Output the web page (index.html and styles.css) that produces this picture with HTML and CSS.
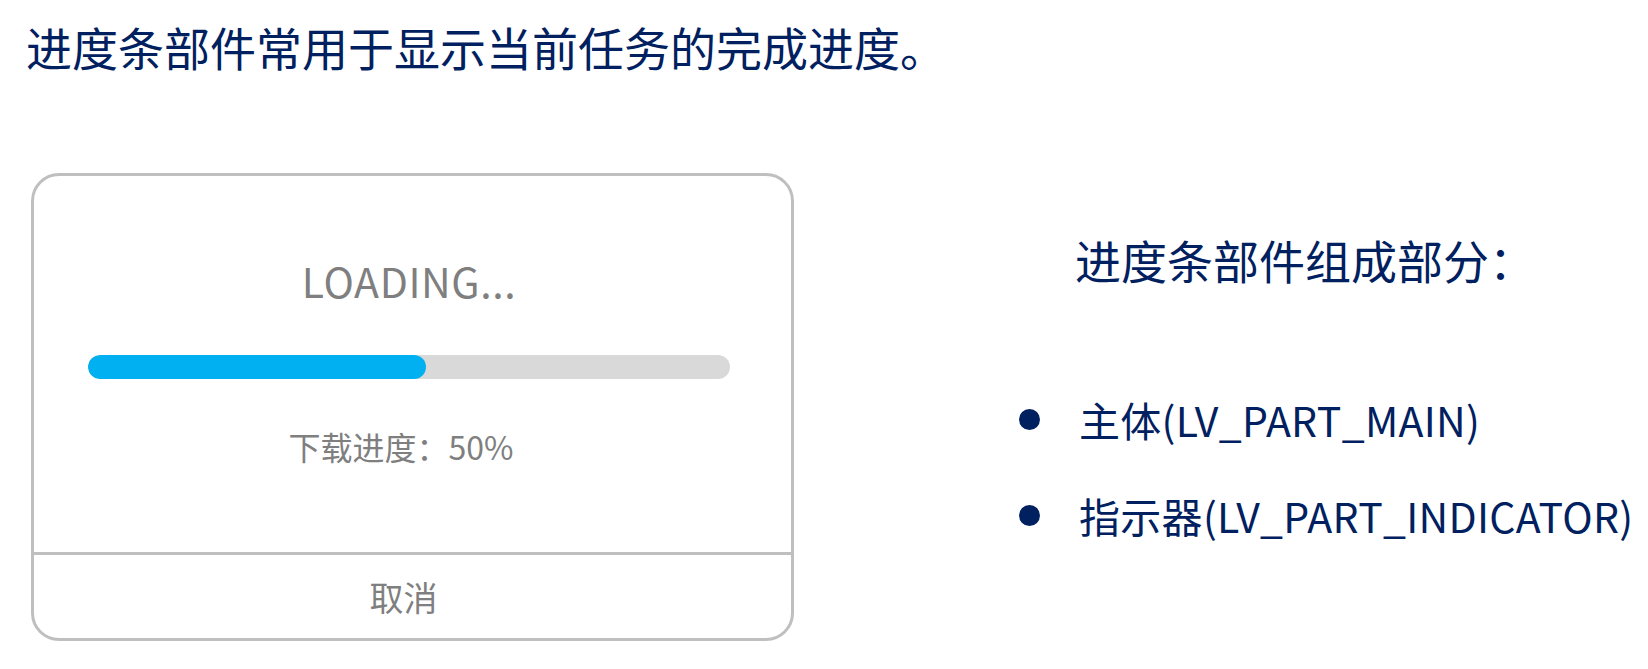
FILE: index.html
```html
<!DOCTYPE html>
<html lang="zh-CN">
<head>
<meta charset="utf-8">
<title>进度条部件</title>
<link rel="stylesheet" href="styles.css">
</head>
<body>
<div class="page">
  <h1 class="title">进度条部件常用于显示当前任务的完成进度。</h1>
  <div class="main">
    <div class="card">
      <div class="card-body">
        <div class="loading">LOADING...</div>
        <div class="bar"><div class="bar-fill" style="width: 52.6%"></div></div>
        <div class="progress-text">下载进度：50%</div>
      </div>
      <div class="card-footer">取消</div>
    </div>
    <div class="info">
      <h2 class="info-title">进度条部件组成部分：</h2>
      <ul class="parts">
        <li class="part"><span class="dot"></span><span class="part-text">主体(LV_PART_MAIN)</span></li>
        <li class="part"><span class="dot"></span><span class="part-text">指示器(LV_PART_INDICATOR)</span></li>
      </ul>
    </div>
  </div>
</div>
</body>
</html>
```

FILE: styles.css
```css
html, body {
  margin: 0;
  padding: 0;
  background: #ffffff;
}

body {
  font-family: "Noto Sans CJK SC", "Noto Sans", sans-serif;
  color: #002060;
}

.page {
  padding: 18px 0 0 26px;
}

.title {
  margin: 0;
  font-size: 46px;
  line-height: 56px;
  font-weight: 400;
  color: #002060;
  white-space: nowrap;
}

.main {
  display: flex;
  align-items: flex-start;
  margin-top: 99px;
  margin-left: 5px;
}

.card {
  width: 757px;
  height: 462px;
  border: 3px solid #bfbfbf;
  border-radius: 28px;
  display: flex;
  flex-direction: column;
  flex-shrink: 0;
}

.card-body {
  height: 376px;
  padding: 0 61px 0 54px;
  border-bottom: 3px solid #bfbfbf;
  display: flex;
  flex-direction: column;
  align-items: stretch;
  text-align: center;
  color: #7f7f7f;
}

.loading {
  margin-top: 79px;
  font-size: 41px;
  line-height: 50px;
  letter-spacing: 0.6px;
}

.bar {
  margin-top: 50px;
  height: 24px;
  border-radius: 12px;
  background: #d9d9d9;
  overflow: hidden;
}

.bar-fill {
  height: 100%;
  border-radius: 12px;
  background: #00b0f0;
}

.progress-text {
  margin-top: 47px;
  padding-right: 16px;
  font-size: 32px;
  line-height: 40px;
}

.card-footer {
  flex: 1;
  display: flex;
  align-items: center;
  justify-content: center;
  padding-right: 18px;
  font-size: 34px;
  color: #7f7f7f;
}

.info {
  margin-left: 225px;
}

.info-title {
  margin: 58px 0 0 56px;
  font-size: 46px;
  line-height: 56px;
  font-weight: 400;
  white-space: nowrap;
}

.parts {
  list-style: none;
  margin: 107px 0 0 0;
  padding: 0;
  display: flex;
  flex-direction: column;
  gap: 46px;
}

.part {
  display: flex;
  align-items: center;
  height: 50px;
  font-size: 41px;
  line-height: 50px;
  letter-spacing: 0.3px;
  white-space: nowrap;
}

.dot {
  width: 21px;
  height: 21px;
  border-radius: 50%;
  background: #002060;
  flex-shrink: 0;
  margin-right: 39px;
}
```
